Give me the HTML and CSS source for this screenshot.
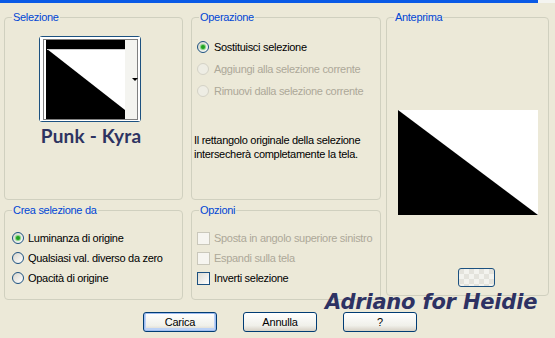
FILE: index.html
```html
<!DOCTYPE html>
<html>
<head>
<meta charset="utf-8">
<link rel="stylesheet" href="styles.css">
</head>
<body>
<div class="titlebar"><div class="tb-blue"></div><div class="tb-white"></div></div>
<div class="main">
  <fieldset class="grp g-sel">
    <legend>Selezione</legend>
    <div class="inner">
      <div class="thumb">
        <svg width="100" height="84" viewBox="0 0 100 84">
          <rect x="0" y="0" width="100" height="84" fill="#fff"/>
          <rect x="3.5" y="2.5" width="94" height="80" fill="none" stroke="#000" stroke-dasharray="1 1"/>
          <rect x="85" y="3" width="12" height="79" fill="#f4f4f0"/>
          <rect x="6" y="3" width="79" height="79" fill="#000"/>
          <polygon points="7,12 85,12 85,73" fill="#fff"/>
          <line x1="7" y1="12.5" x2="85" y2="12.5" stroke="#cfcfcf"/>
          <polygon points="92,41 98,41 95,44" fill="#000"/>
        </svg>
      </div>
      <div class="punk">Punk - Kyra</div>
    </div>
  </fieldset>

  <fieldset class="grp g-op">
    <legend>Operazione</legend>
    <div class="inner">
      <div class="row"><span class="radio on"></span><span>Sostituisci selezione</span></div>
      <div class="row dis"><span class="radio"></span><span>Aggiungi alla selezione corrente</span></div>
      <div class="row dis"><span class="radio"></span><span>Rimuovi dalla selezione corrente</span></div>
      <p class="note">Il rettangolo originale della selezione intersecherà completamente la tela.</p>
    </div>
  </fieldset>

  <fieldset class="grp g-prev">
    <legend>Anteprima</legend>
    <div class="inner">
      <div class="preview">
        <svg width="140" height="105" viewBox="0 0 140 105">
          <rect width="140" height="105" fill="#fff"/>
          <polygon points="0,0 140,105 0,105" fill="#000"/>
        </svg>
      </div>
      <div class="mini"></div>
    </div>
  </fieldset>

  <fieldset class="grp g-crea">
    <legend>Crea selezione da</legend>
    <div class="inner">
      <div class="row2"><span class="radio on"></span><span>Luminanza di origine</span></div>
      <div class="row2"><span class="radio"></span><span>Qualsiasi val. diverso da zero</span></div>
      <div class="row2"><span class="radio"></span><span>Opacità di origine</span></div>
    </div>
  </fieldset>

  <fieldset class="grp g-opz">
    <legend>Opzioni</legend>
    <div class="inner">
      <div class="row2 dis"><span class="check"></span><span>Sposta in angolo superiore sinistro</span></div>
      <div class="row2 dis"><span class="check"></span><span>Espandi sulla tela</span></div>
      <div class="row2"><span class="check"></span><span>Inverti selezione</span></div>
    </div>
  </fieldset>
</div>
<div class="buttons">
  <button class="btn def">Carica</button>
  <button class="btn">Annulla</button>
  <button class="btn">?</button>
</div>
<div class="sig">Adriano for Heidie</div>
</body>
</html>
```

FILE: styles.css
```css
html, body { margin: 0; padding: 0; }
body {
  width: 555px; height: 338px; overflow: hidden;
  background: #ECE9D8;
  font-family: "Liberation Sans", Arial, sans-serif;
  font-size: 11px; color: #000;
  letter-spacing: -0.3px;
  position: relative;
}
.titlebar { display: flex; height: 3px; }
.tb-blue { width: 538px; background: #0a5ae6; }
.tb-white { flex: 1; background: #f4f4f0; }

.main {
  display: grid;
  grid-template-columns: 179px 8px 190px 5px 163px;
  grid-template-rows: 190px 97px;
  row-gap: 3px;
  padding: 7px 0 0 4px;
}
.grp {
  margin: 0; padding: 0;
  border: 1px solid #D0D0BF;
  border-radius: 4px;
  box-sizing: border-box;
  min-width: 0;
}
.grp legend {
  color: #0046D5;
  font-size: 11px; line-height: 14px;
  padding: 0 1px; margin-left: 7px;
}
.g-sel { grid-column: 1; grid-row: 1; }
.g-op { grid-column: 3; grid-row: 1; }
.g-prev { grid-column: 5; grid-row: 1 / span 2; height: 286px; align-self: start; }
.g-crea { grid-column: 1; grid-row: 2; }
.g-opz { grid-column: 3; grid-row: 2; }

.g-sel .inner { padding: 12px 0 0 34px; }
.g-op .inner { padding: 12px 0 0 2px; }
.g-prev .inner { padding: 86px 0 0 11px; }
.g-crea .inner { padding: 11px 0 0 7px; }
.g-opz .inner { padding: 11px 0 0 5px; }

.thumb {
  width: 102px; height: 86px; box-sizing: border-box;
  border: 1px solid #1c5180; border-radius: 3px;
  background: #fff;
}
.thumb svg { display: block; }
.punk {
  width: 104px; text-align: center; white-space: nowrap;
  margin-top: 2px;
  font-family: Lato, "DejaVu Sans", sans-serif; font-weight: bold;
  font-size: 19px; line-height: 24px; color: #2d3361;
  letter-spacing: 0.2px;
}

.row { display: flex; align-items: center; height: 22px; padding-left: 3px; gap: 5px; }
.row2 { display: flex; align-items: center; height: 20px; gap: 4px; white-space: nowrap; }
.dis { color: #ACA899; }

.radio {
  width: 12px; height: 12px; box-sizing: border-box; flex: none;
  border-radius: 50%;
  border: 1px solid #1c5180;
  background: linear-gradient(135deg, #d8d6cc, #ffffff);
  display: flex; align-items: center; justify-content: center;
}
.radio.on::after {
  content: ""; width: 4px; height: 4px; border-radius: 50%;
  background: #21a121; box-shadow: 0 0 1px 1px #7ad27a;
}
.dis .radio { border-color: #d4d2c6; background: #eeede4; }

.check {
  width: 13px; height: 13px; box-sizing: border-box; flex: none;
  border: 1px solid #1c5180;
  background: linear-gradient(135deg, #dcdbd4, #ffffff);
}
.dis .check { border-color: #cac8bb; background: #f6f5f0; }

.note { margin: 31px 0 0 0; line-height: 14px; width: 186px; }

.preview svg { display: block; }
.mini {
  width: 37px; height: 19px; box-sizing: border-box;
  margin: 53px 0 0 60px;
  border: 1px solid #1c5180; border-radius: 3px;
  background:
    repeating-conic-gradient(#f3f3ee 0 25%, #e4e3dc 0 50%) 0 0 / 10px 10px;
}

.buttons { display: flex; gap: 26px; padding: 12px 0 0 143px; }
.btn {
  width: 74px; height: 20px; box-sizing: border-box;
  margin: 0; padding: 0;
  font-family: "Liberation Sans", Arial, sans-serif; font-size: 11px; color: #000;
  letter-spacing: -0.2px;
  border: 1px solid #003C74; border-radius: 3px;
  background: linear-gradient(#ffffff, #f0f0ea 70%, #d6d0c5);
}
.btn.def { box-shadow: inset 0 0 0 1px #9fbcf0, inset 0 -1px 0 2px #bcd2f6; }

.sig {
  position: absolute; left: 325px; top: 290px;
  font-family: "DejaVu Sans", sans-serif; font-weight: bold; font-style: italic;
  font-size: 21px; line-height: 24px; color: #2e3263;
  letter-spacing: -0.2px;
}
```
